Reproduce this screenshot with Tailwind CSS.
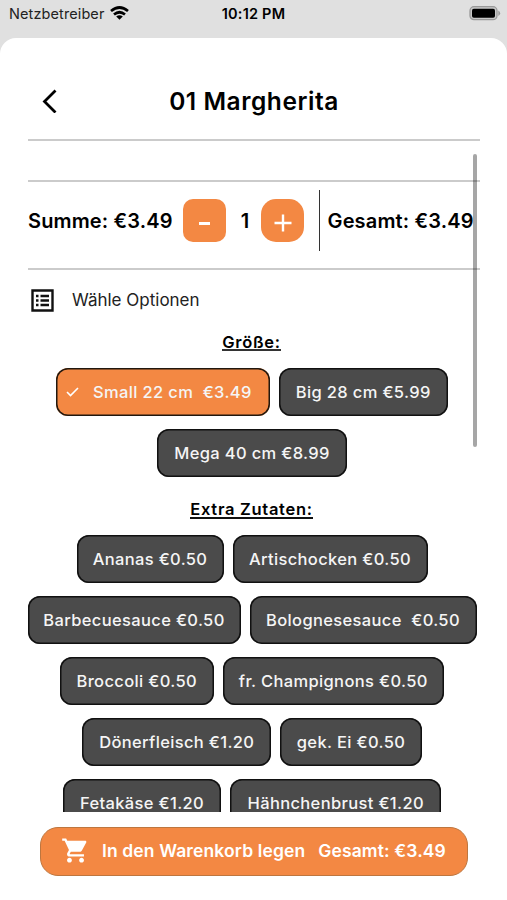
<!DOCTYPE html>
<html lang="de">
<head>
<meta charset="utf-8">
<title>01 Margherita</title>
<script src="https://cdn.jsdelivr.net/npm/@tailwindcss/browser@4"></script>
</head>
<body class="h-[900px] w-[507px] overflow-hidden bg-[#e0e0e0] font-['Inter','Noto_Sans',sans-serif] text-black">
<header class="grid h-[38px] grid-cols-3 px-2 pt-1 text-[14.5px] leading-5">
  <div class="flex items-start gap-[5px] pl-px text-[#222]"><span class="whitespace-nowrap text-[14.5px] tracking-[0.1px]">Netzbetreiber</span>
    <svg class="ml-px mt-[2px] h-[14px] w-[19px] shrink-0" viewBox="0 0 19 14" fill="none" stroke="#000" stroke-width="2.700"><path d="M1 5Q9.500-2 18 5M4 8.500Q9.500 4 15 8.500"/><path d="M6.200 10.600Q9.500 8 12.800 10.600L9.500 13.800Z" fill="#000" stroke="none"/></svg>
  </div>
  <div class="whitespace-nowrap text-center font-semibold tracking-[0.2px]">10:12 PM</div>
  <div class="flex justify-end pt-[2px]"><svg class="-mr-[2px] h-[15px] w-[32px]" viewBox="0 0 32 15"><rect x="1" y=".7" width="27" height="13" rx="4" fill="#c8c8c8" stroke="#999" stroke-width="1.300"/><rect x="3" y="2.700" width="23" height="9" rx="1.800"/><path d="M29.300 4.500Q33 7.200 29.300 10Z" fill="#999"/></svg></div>
</header>
<main class="flex h-[862px] flex-col rounded-t-[16px] bg-white">
  <div class="mx-7 grid h-[103px] w-[452px] shrink-0 grid-cols-[44px_1fr_44px] items-center border-b-2 border-[#cbcbcb] pt-[25px]">
    <svg class="ml-[13px] h-6 w-4" viewBox="0 0 16 24" fill="none" stroke="#000" stroke-width="2.800"><path d="M14.500 1.500L3.500 12.500L14.500 23.500"/></svg>
    <h1 class="whitespace-nowrap text-center text-[24.5px] font-semibold tracking-[0.55px]">01 Margherita</h1>
  </div>
  <div class="relative h-[670.5px] shrink-0 overflow-hidden px-7">
    <div class="h-[40.500px] w-[452px] border-b-2 border-[#cbcbcb]"></div>
    <div class="flex h-[88px] w-[452px] items-start whitespace-nowrap border-b-2 border-[#cbcbcb] pt-[8px] text-[20px] font-semibold">
      <span class="mt-[16px] w-[155px] leading-[30px] tracking-[0.15px]">Summe: €3.49</span>
      <button class="mt-[9.500px] flex h-[43px] w-[43px] items-center justify-center rounded-[10px] bg-[#f38843]" aria-label="Weniger"><i class="mt-[6px] h-[3px] w-[11px] bg-white"></i></button>
      <span class="mt-[16px] w-[35px] pl-[3px] text-center leading-[30px]">1</span>
      <button class="mt-[9.500px] flex h-[43px] w-[43px] items-center justify-center rounded-[15px] bg-[#f38843]" aria-label="Mehr"><svg class="mt-[5px] h-[18px] w-[18px]" viewBox="0 0 18 18" stroke="#fff" stroke-width="2.400"><path d="M.5 9h17M9 .5v17"/></svg></button>
      <span class="ml-[14.500px] h-[61px] w-[1.500px] bg-[#333]"></span>
      <span class="ml-[7.500px] mt-[16px] leading-[30px] tracking-[0.15px]">Gesamt: €3.49</span>
    </div>
    <div class="flex h-[62px] items-center">
      <svg class="ml-[3px] h-[23px] w-[23px]" viewBox="0 0 23 23" fill="none" stroke="#111" stroke-width="2.400"><path d="M1.500 1.500h20v20h-20zM9.500 7h8.500M9.500 11.500h8.500M9.500 16h8.500M5 7h2.500M5 11.500h2.500M5 16h2.500"/></svg>
      <span class="ml-[18px] text-[17px] text-[#222]">Wähle Optionen</span>
    </div>
    <h2 class="flex h-[36px] w-[447px] justify-center text-[16.5px] font-semibold tracking-[0.7px]"><span class="h-[19.500px] whitespace-nowrap border-b-2 border-[#333] leading-[20px]">Größe:</span></h2>
    <div class="-mx-4 flex w-[480px] flex-wrap justify-center gap-x-[9px] gap-y-[13px] whitespace-pre text-[16.5px] font-medium tracking-[0.35px] text-[#f5f5f5]">
      <div class="flex h-12 w-[213.500px] items-center rounded-[12px] bg-[#f38843] pl-[10px] pt-px shadow-[inset_0_0_0_1.5px_#21180f]"><svg class="mr-[14px] h-[12px] w-[13px]" viewBox="0 0 13 12" fill="none" stroke="#fff" stroke-width="1.600"><path d="M1 6l3.500 3.500L12 2"/></svg>Small 22 cm  €3.49</div>
      <div class="flex h-12 w-[169.500px] items-center justify-center rounded-[12px] bg-[#4b4b4b] pt-px shadow-[inset_0_0_0_1.5px_#111]">Big 28 cm €5.99</div>
      <div class="flex h-12 w-[189.500px] items-center justify-center rounded-[12px] bg-[#4b4b4b] pt-px shadow-[inset_0_0_0_1.5px_#111]">Mega 40 cm €8.99</div>
    </div>
    <h2 class="flex h-[58px] w-[447px] justify-center pt-[22px] text-[16.5px] font-semibold tracking-[0.7px]"><span class="h-[20px] whitespace-nowrap border-b-2 border-[#111] leading-[20px]">Extra Zutaten:</span></h2>
    <div class="-mx-4 flex w-[480px] flex-wrap justify-center gap-x-[9px] gap-y-[13px] whitespace-pre px-[14px] text-[16.5px] font-medium tracking-[0.35px] text-[#f5f5f5]">
      <div class="flex h-12 w-[147px] items-center justify-center rounded-[12px] bg-[#4b4b4b] pt-px shadow-[inset_0_0_0_1.5px_#111]">Ananas €0.50</div>
      <div class="flex h-12 w-[195px] items-center justify-center rounded-[12px] bg-[#4b4b4b] pt-px shadow-[inset_0_0_0_1.5px_#111]">Artischocken €0.50</div>
      <div class="flex h-12 w-[213px] items-center justify-center rounded-[12px] bg-[#4b4b4b] pt-px shadow-[inset_0_0_0_1.5px_#111]">Barbecuesauce €0.50</div>
      <div class="flex h-12 w-[227px] items-center justify-center rounded-[12px] bg-[#4b4b4b] pt-px shadow-[inset_0_0_0_1.5px_#111]">Bolognesesauce  €0.50</div>
      <div class="flex h-12 w-[153.500px] items-center justify-center rounded-[12px] bg-[#4b4b4b] pt-px shadow-[inset_0_0_0_1.5px_#111]">Broccoli €0.50</div>
      <div class="flex h-12 w-[221.500px] items-center justify-center rounded-[12px] bg-[#4b4b4b] pt-px shadow-[inset_0_0_0_1.5px_#111]">fr. Champignons €0.50</div>
      <div class="flex h-12 w-[189px] items-center justify-center rounded-[12px] bg-[#4b4b4b] pt-px shadow-[inset_0_0_0_1.5px_#111]">Dönerfleisch €1.20</div>
      <div class="flex h-12 w-[141.500px] items-center justify-center rounded-[12px] bg-[#4b4b4b] pt-px shadow-[inset_0_0_0_1.5px_#111]">gek. Ei €0.50</div>
      <div class="flex h-12 w-[158.500px] items-center justify-center rounded-[12px] bg-[#4b4b4b] pt-px shadow-[inset_0_0_0_1.5px_#111]">Fetakäse €1.20</div>
      <div class="flex h-12 w-[211px] items-center justify-center rounded-[12px] bg-[#4b4b4b] pt-px shadow-[inset_0_0_0_1.5px_#111]">Hähnchenbrust €1.20</div>
    </div>
    <div class="absolute left-[473px] top-[12.500px] h-[293px] w-[3.500px] rounded-full bg-black/35"></div>
  </div>
  <button class="ml-[40px] mt-[15.500px] flex h-[49px] w-[428px] shrink-0 items-center whitespace-pre rounded-[18px] border border-[#bd763f] bg-[#f38843] pl-[20px] text-[17.5px] font-semibold tracking-[0.12px] text-white">
    <svg class="mb-[2px] mr-[12px] h-[29px] w-[29px]" viewBox="0 0 24 24" fill="#fff"><path d="M7 18c-1.100 0-1.990.9-1.990 2S5.900 22 7 22s2-.9 2-2-.9-2-2-2zM1 2v2h2l3.600 7.590-1.350 2.450c-.16.280-.25.610-.25.960 0 1.100.9 2 2 2h12v-2H7.420c-.14 0-.25-.11-.25-.25l.03-.12.900-1.630h7.450c.75 0 1.410-.41 1.750-1.030l3.580-6.490c.08-.14.12-.31.12-.48 0-.55-.45-1-1-1H5.210l-.94-2H1zm16 16c-1.100 0-1.990.9-1.990 2s.89 2 1.990 2 2-.9 2-2-.9-2-2-2z"/></svg><span>In den Warenkorb legen</span><span class="ml-[13px]">Gesamt: €3.49</span>
  </button>
</main>
</body>
</html>
